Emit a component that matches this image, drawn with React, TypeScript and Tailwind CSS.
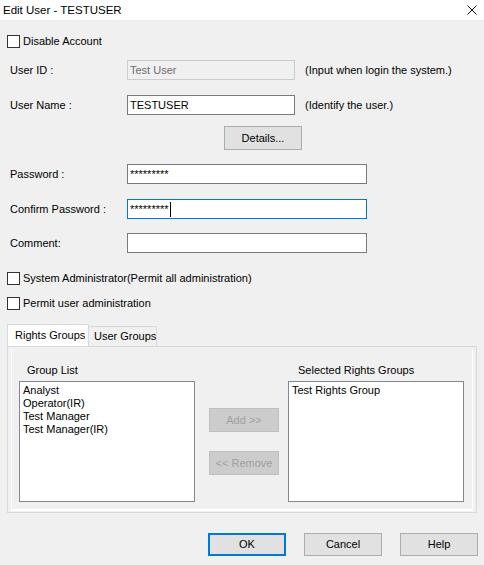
import React from "react";

const font = { fontFamily: '"Liberation Sans", Arial, sans-serif' };

function CheckBox({ label }: { label: string }) {
  return (
    <div className="flex items-center h-[13px] ml-[7px]">
      <div className="w-[13px] h-[13px] border border-[#333333] bg-white" />
      <span className="ml-[3px] leading-[13px] whitespace-nowrap">{label}</span>
    </div>
  );
}

function Field({
  label,
  value,
  width,
  hint,
  disabled,
  focused,
  caret,
}: {
  label: string;
  value?: string;
  width: string;
  hint?: string;
  disabled?: boolean;
  focused?: boolean;
  caret?: boolean;
}) {
  const box = disabled
    ? "bg-[#f0f0f0] border-[#cccccc] text-[#6d6d6d]"
    : focused
      ? "bg-white border-[#0078d7] text-black"
      : "bg-white border-[#7a7a7a] text-black";
  return (
    <div className="flex items-center h-[20px]">
      <span className="w-[127px] pl-[10px] shrink-0">{label}</span>
      <div className={`${width} h-[20px] border ${box} flex items-center pl-[2px] shrink-0`}>
        <span className="leading-[13px]">{value}</span>
        {caret && <span className="w-px h-[15px] bg-black ml-[1px]" />}
      </div>
      {hint && <span className="ml-[10px] whitespace-nowrap">{hint}</span>}
    </div>
  );
}

function Button({
  children,
  width = "w-[78px]",
  height = "h-[24px]",
  disabled,
  primary,
}: {
  children: React.ReactNode;
  width?: string;
  height?: string;
  disabled?: boolean;
  primary?: boolean;
}) {
  const look = disabled
    ? "bg-[#cccccc] border border-[#bfbfbf] text-[#a0a0a0]"
    : primary
      ? "bg-[#e1e1e1] border-2 border-[#0078d7] text-black"
      : "bg-[#e1e1e1] border border-[#adadad] text-black";
  return (
    <div className={`${width} ${height} ${look} flex items-center justify-center shrink-0 whitespace-nowrap`}>
      {children}
    </div>
  );
}

function ListBox({ items }: { items: string[] }) {
  return (
    <div className="w-[176px] h-[121px] bg-white border border-[#828790] pt-[2px] pl-[3px]">
      {items.map((item) => (
        <div key={item} className="leading-[13px] whitespace-nowrap">
          {item}
        </div>
      ))}
    </div>
  );
}

export default function App() {
  return (
    <div className="w-[484px] h-[565px] bg-[#f0f0f0] text-[11px] text-black flex flex-col" style={font}>
      {/* Title bar */}
      <div className="h-[21px] bg-white flex items-center justify-between border-b border-[#ececec] shrink-0">
        <span className="pl-[3px] text-[11.5px] leading-[14px]">Edit User - TESTUSER</span>
        <svg className="mr-[7px]" width="10" height="10" viewBox="0 0 10 10">
          <path d="M0.5 0.5 L9.5 9.5 M9.5 0.5 L0.5 9.5" stroke="#111" strokeWidth="1" />
        </svg>
      </div>

      <div className="mt-[14px]">
        <CheckBox label="Disable Account" />
      </div>

      <div className="mt-[12px]">
        <Field
          label="User ID :"
          value="Test User"
          width="w-[168px]"
          hint="(Input when login the system.)"
          disabled
        />
      </div>
      <div className="mt-[15px]">
        <Field label="User Name :" value="TESTUSER" width="w-[168px]" hint="(Identify the user.)" />
      </div>

      <div className="mt-[11px] ml-[224px]">
        <Button>Details...</Button>
      </div>

      <div className="mt-[14px]">
        <Field label="Password :" value="*********" width="w-[240px]" />
      </div>
      <div className="mt-[15px]">
        <Field label="Confirm Password :" value="*********" width="w-[240px]" focused caret />
      </div>
      <div className="mt-[14px]">
        <Field label="Comment:" value="" width="w-[240px]" />
      </div>

      <div className="mt-[19px]">
        <CheckBox label="System Administrator(Permit all administration)" />
      </div>
      <div className="mt-[12px]">
        <CheckBox label="Permit user administration" />
      </div>

      {/* Tabs */}
      <div className="mt-[14px] ml-[7px] flex items-end h-[22px]">
        <div className="w-[82px] h-[22px] bg-white border border-b-0 border-[#d9d9d9] flex items-center pl-[7px] whitespace-nowrap">
          Rights Groups
        </div>
        <div className="w-[68px] h-[20px] bg-[#f0f0f0] border border-l-0 border-b-0 border-[#d9d9d9] flex items-center pl-[5px] whitespace-nowrap">
          User Groups
        </div>
      </div>

      {/* Tab panel */}
      <div className="ml-[7px] w-[470px] h-[167px] border border-[#d9d9d9] bg-[#f0f0f0] pt-[2px] px-[3px] pb-px">
        <div className="w-full h-full border border-t-0 border-white border-b-2 flex pl-[7px] pt-[15px]">
          <div className="flex flex-col">
            <span className="ml-[8px] leading-[13px]">Group List</span>
            <div className="mt-[4px]">
              <ListBox items={["Analyst", "Operator(IR)", "Test Manager", "Test Manager(IR)"]} />
            </div>
          </div>

          <div className="ml-[14px] flex flex-col pt-[44px]">
            <Button width="w-[70px]" disabled>
              Add &gt;&gt;
            </Button>
            <div className="mt-[19px]">
              <Button width="w-[70px]" disabled>
                &lt;&lt; Remove
              </Button>
            </div>
          </div>

          <div className="ml-[9px] flex flex-col">
            <span className="ml-[10px] leading-[13px]">Selected Rights Groups</span>
            <div className="mt-[4px]">
              <ListBox items={["Test Rights Group"]} />
            </div>
          </div>
        </div>
      </div>

      {/* Dialog buttons */}
      <div className="mt-[20px] ml-[208px] flex gap-[18px]">
        <Button height="h-[23px]" primary>
          OK
        </Button>
        <Button height="h-[23px]">Cancel</Button>
        <Button height="h-[23px]">Help</Button>
      </div>
    </div>
  );
}
